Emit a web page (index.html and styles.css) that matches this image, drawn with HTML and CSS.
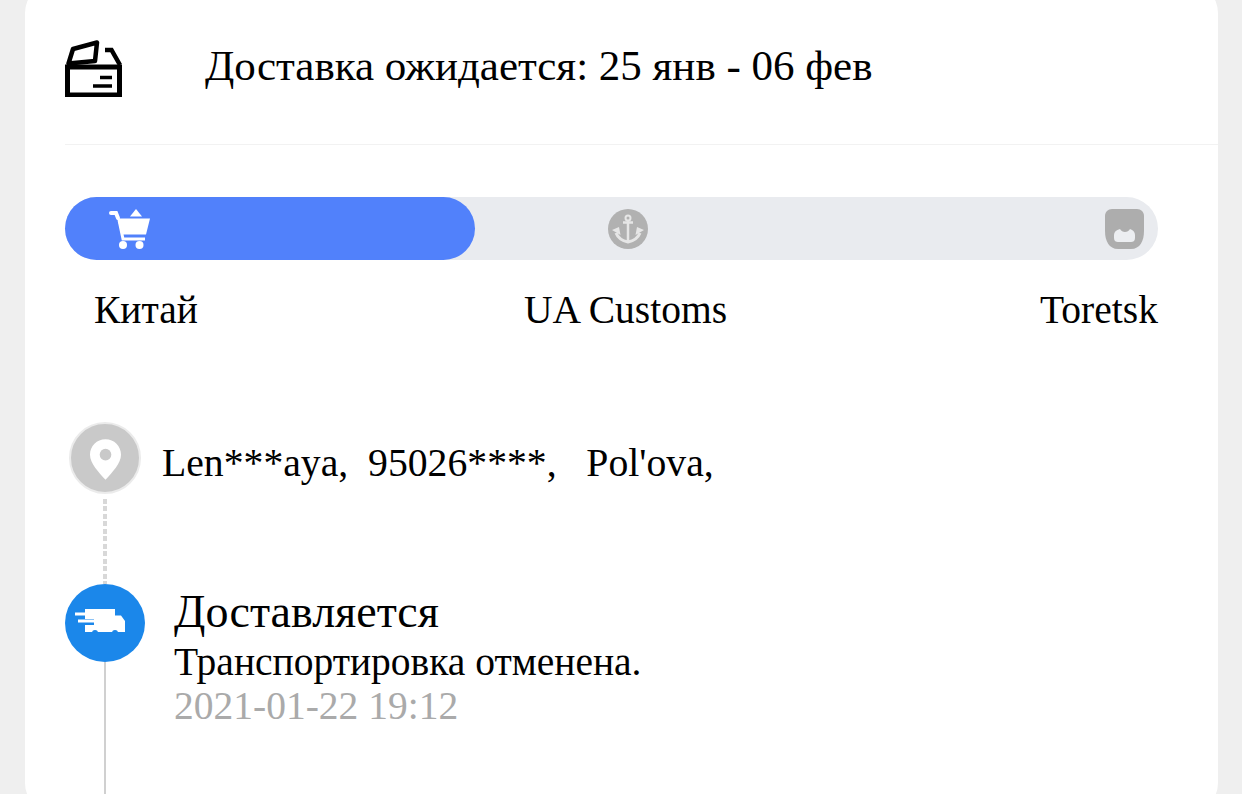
FILE: index.html
```html
<!DOCTYPE html>
<html lang="ru">
<head>
  <meta charset="UTF-8">
  <title>Доставка</title>
  <link rel="stylesheet" href="styles.css">
</head>
<body>

  <div class="card">
    <div class="eta">
      <svg class="eta-icon" viewBox="0 0 57 57" width="57" height="57">
        <path d="M8 9 32 2.500 30 21 3.500 23.500Z" fill="none" stroke="#000" stroke-width="4.500" stroke-linejoin="round"/>
        <path d="M40 10H46.500L55 25" fill="none" stroke="#000" stroke-width="4.500"/>
        <rect x="2.500" y="27" width="52" height="28" fill="none" stroke="#000" stroke-width="5"/>
        <path d="M35 37.500H47M28 46H47" fill="none" stroke="#000" stroke-width="3.500"/>
      </svg>
      <div class="eta-text">Доставка ожидается: 25 янв - 06 фев</div>
    </div>

    <div class="progress">
      <div class="progress-fill">
        <svg viewBox="0 0 42 42" width="42" height="42">
          <path d="M2 5H7L9 10" fill="none" stroke="#fff" stroke-width="4" stroke-linecap="round"/>
          <path d="M27 1 21 8.500H33Z" fill="#fff"/>
          <path d="M8.500 10.500H41L37 26.500H12.500Z" fill="#fff"/>
          <path d="M10 12 14 31H36" fill="none" stroke="#fff" stroke-width="3"/>
          <circle cx="14" cy="37" r="4" fill="#fff"/>
          <circle cx="30.500" cy="37" r="4" fill="#fff"/>
        </svg>
      </div>
      <svg class="step-port" viewBox="0 0 40 40" width="40" height="40">
        <circle cx="20" cy="20" r="20" fill="#b1b1b1"/>
        <circle cx="20" cy="9" r="2.500" fill="none" stroke="#e6e6e6" stroke-width="2"/>
        <path d="M15 13.500H25M20 11V33" fill="none" stroke="#e6e6e6" stroke-width="2.500"/>
        <path d="M8 24C10 29 15 32 20 33 25 32 30 29 32 24" fill="none" stroke="#e6e6e6" stroke-width="3"/>
        <path d="M4 21 11 18 12.500 26ZM36 21 29 18 27.500 26Z" fill="#e6e6e6"/>
      </svg>
      <svg class="step-home" viewBox="0 0 39 40" width="39" height="40">
        <path d="M7 0H32C36 0 39 3 39 7V22C39 32 35 40 26 40H13C4 40 0 32 0 22V7C0 3 3 0 7 0Z" fill="#adadad"/>
        <path d="M9 29V26C9 23 11 21 15 20 16 22 18 23 20 23 22 23 24 22 25 20 28 21 30 23 30 26V29C30 32 28 33 26 33H13C11 33 9 32 9 29Z" fill="#eceef1"/>
      </svg>
    </div>

    <div class="stops">
      <span>Китай</span>
      <span>UA Customs</span>
      <span>Toretsk</span>
    </div>

    <div class="track">
      <div class="track-row track-row-address">
        <div class="rail">
          <div class="pin">
            <svg class="pin-icon" viewBox="0 0 32 42" width="31" height="41">
              <path d="M16 0C7 0 0 7 0 16 0 25 9 34 16 42 23 34 32 25 32 16 32 7 25 0 16 0Z" fill="#fff"/>
              <circle cx="16" cy="16" r="6" fill="#c9c9c9"/>
            </svg>
          </div>
          <div class="rail-dash"></div>
        </div>
        <div class="address">Len***aya,&nbsp; 95026****, &nbsp; Pol'ova,</div>
      </div>

      <div class="track-row">
        <div class="rail">
          <div class="truck">
            <svg class="truck-icon" viewBox="0 0 50 26" width="50" height="26">
              <path d="M10 0H40V6.500H46L50 12V23H10V16H19V10H10Z" fill="#fff"/>
              <path d="M0 5H12M3 12H19" fill="none" stroke="#fff" stroke-width="3"/>
              <circle cx="20" cy="24" r="3" fill="#1b87ea"/>
              <circle cx="40" cy="24" r="3" fill="#1b87ea"/>
            </svg>
          </div>
          <div class="rail-line"></div>
        </div>
        <div class="event">
          <div class="event-title">Доставляется</div>
          <div class="event-text">Транспортировка отменена.</div>
          <div class="event-time">2021-01-22 19:12</div>
        </div>
      </div>
    </div>
  </div>

</body>
</html>
```

FILE: styles.css
```css
html, body {
  height: 794px;
  overflow: hidden;
}

body {
  margin: 0;
  padding: 0 24px 0 25px;
  background: #efefef;
  font-family: "Liberation Serif", "Times New Roman", serif;
  color: #000;
}

.card {
  height: 830px;
  margin-top: -17px;
  padding: 17px 0 0 40px;
  background: #fff;
  border-radius: 30px;
  box-sizing: border-box;
}

.eta {
  display: flex;
  align-items: center;
  height: 144px;
  border-bottom: 1px solid #f2f2f2;
}

.eta-icon {
  margin-top: -7px;
}

.eta-text {
  margin-left: 83px;
  margin-top: -14px;
  font-size: 43px;
}

.progress {
  display: flex;
  align-items: center;
  width: 1093px;
  height: 63px;
  margin-top: 52px;
  background: #e9ebef;
  border-radius: 32px;
}

.progress-fill {
  display: flex;
  align-items: center;
  width: 410px;
  height: 63px;
  padding-left: 44px;
  background: #5181fb;
  border-radius: 32px;
  box-sizing: border-box;
}

.step-port {
  margin-left: 133px;
}

.step-home {
  margin-left: auto;
  margin-right: 14px;
}

.stops {
  display: grid;
  grid-template-columns: 430px 516px auto;
  margin-top: 28px;
  padding-left: 29px;
  font-size: 39.500px;
  line-height: 44px;
}

.track {
  margin-top: 90px;
}

.track-row {
  display: flex;
}

.track-row-address {
  height: 162px;
}

.rail {
  display: flex;
  flex-direction: column;
  align-items: center;
  width: 80px;
  flex: none;
}

.pin {
  display: flex;
  align-items: center;
  justify-content: center;
  flex: none;
  width: 72px;
  height: 72px;
  background: #c9c9c9;
  border: 2px solid #ebebeb;
  border-radius: 50%;
  box-sizing: border-box;
}

.pin-icon {
  margin-top: 2px;
}

.rail-dash {
  flex: 1;
  width: 4px;
  margin-top: 5px;
  background: repeating-linear-gradient(#d8d8d8 0 5px, transparent 5px 7.500px);
}

.truck {
  display: flex;
  align-items: center;
  justify-content: center;
  flex: none;
  width: 80px;
  height: 78px;
  background: #1b87ea;
  border-radius: 50%;
}

.truck-icon {
  margin-left: -10px;
  margin-top: -2px;
}

.rail-line {
  width: 2px;
  height: 132px;
  background: #d0d0d0;
}

.address {
  margin-left: 17px;
  margin-top: 19px;
  font-size: 39.700px;
  line-height: 44px;
}

.event {
  margin-left: 29px;
}

.event-title {
  font-size: 46px;
  line-height: 56px;
}

.event-text {
  font-size: 39.500px;
  line-height: 44px;
}

.event-time {
  font-size: 39.500px;
  line-height: 44px;
  color: #aaa;
}
```
